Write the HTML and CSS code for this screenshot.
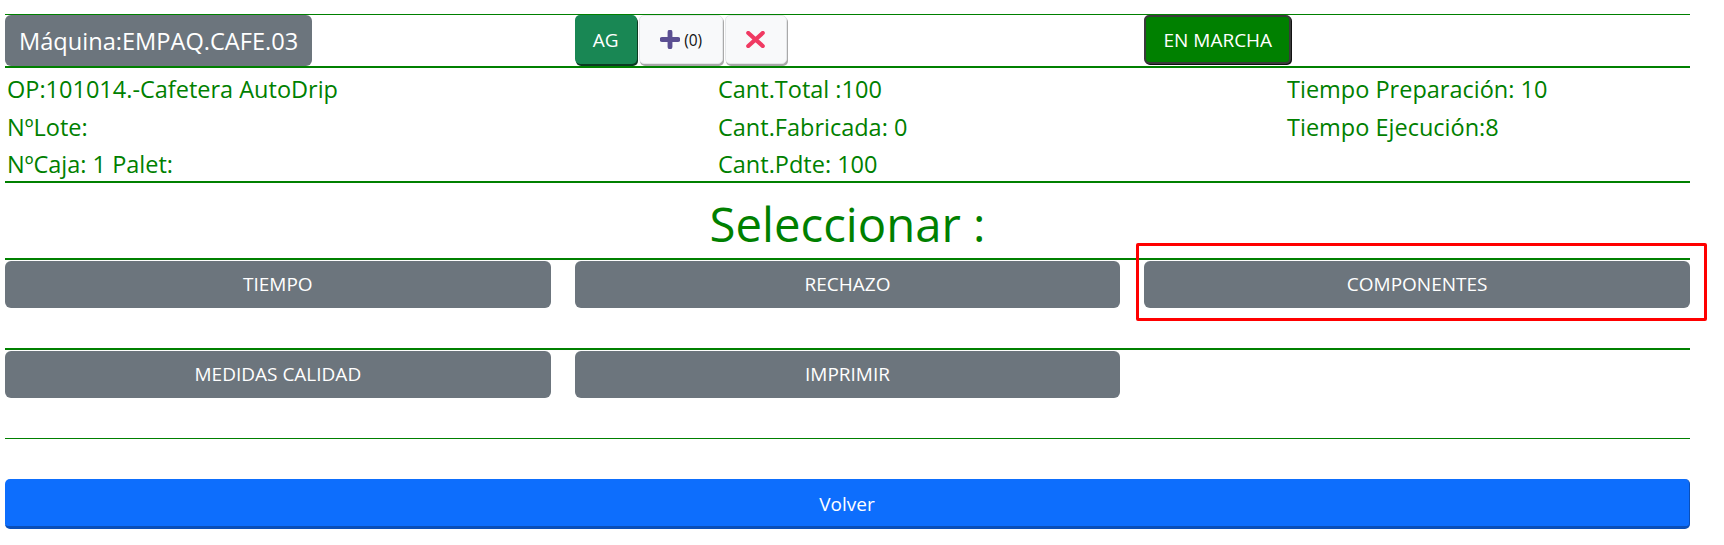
FILE: index.html
```html
<!DOCTYPE html>
<html lang="es">
<head>
<meta charset="utf-8">
<title>Máquina EMPAQ.CAFE.03</title>
<link rel="stylesheet" href="styles.css">
</head>
<body>
<div class="page">
  <div class="header">
    <div class="cell">
      <span class="machine">Máquina:EMPAQ.CAFE.03</span>
    </div>
    <div class="cell tools">
      <button class="btn btn-ag">AG</button>
      <button class="btn btn-light btn-plus">
        <svg class="icon-plus" viewBox="0 0 19 18" width="19" height="18" aria-hidden="true">
          <path d="M9.5 2 V16 M2 9 H17" stroke="#5b4f92" stroke-width="4.6" stroke-linecap="round" fill="none"/>
        </svg>
        <span class="count">(0)</span>
      </button>
      <button class="btn btn-light btn-x">
        <svg class="icon-x" viewBox="0 0 19 17" width="19" height="17" aria-hidden="true">
          <path d="M2.3 2 L16.7 15 M16.7 2 L2.3 15" stroke="#f03a62" stroke-width="4.2" stroke-linecap="round" fill="none"/>
        </svg>
      </button>
    </div>
    <div class="cell">
      <button class="btn btn-run">EN MARCHA</button>
    </div>
  </div>

  <div class="info">
    <div class="info-col">
      <div class="info-line">OP:101014.-Cafetera AutoDrip</div>
      <div class="info-line">NºLote:</div>
      <div class="info-line">NºCaja: 1 Palet:</div>
    </div>
    <div class="info-col">
      <div class="info-line">Cant.Total :100</div>
      <div class="info-line">Cant.Fabricada: 0</div>
      <div class="info-line">Cant.Pdte: 100</div>
    </div>
    <div class="info-col">
      <div class="info-line">Tiempo Preparación: 10</div>
      <div class="info-line">Tiempo Ejecución:8</div>
    </div>
  </div>

  <div class="title">
    <h1>Seleccionar :</h1>
  </div>

  <div class="btn-row">
    <button class="btn btn-gray">TIEMPO</button>
    <button class="btn btn-gray">RECHAZO</button>
    <button class="btn btn-gray">COMPONENTES</button>
  </div>

  <div class="btn-row btn-row-last">
    <button class="btn btn-gray">MEDIDAS CALIDAD</button>
    <button class="btn btn-gray">IMPRIMIR</button>
  </div>

  <button class="btn btn-back">Volver</button>
</div>

<div class="highlight"></div>
</body>
</html>
```

FILE: styles.css
```css
* {
  box-sizing: border-box;
}

html, body {
  margin: 0;
  padding: 0;
  background: #ffffff;
}

body {
  font-family: "Open Sans", "Noto Sans", "Liberation Sans", sans-serif;
  color: #212529;
  position: relative;
  height: 545px;
  overflow: hidden;
}

.page {
  width: 1685px;
  margin-left: 5px;
  padding-top: 14px;
}

/* ---------- header ---------- */
.header {
  display: grid;
  grid-template-columns: repeat(3, 1fr);
  column-gap: 24px;
  border-top: 1px solid #008000;
  border-bottom: 2px solid #008000;
  height: 54px;
  align-items: start;
}

.cell {
  display: flex;
  align-items: flex-start;
}

.machine {
  display: inline-flex;
  align-items: center;
  height: 51px;
  padding: 0 14px;
  background: #6c757d;
  color: #ffffff;
  font-size: 23.6px;
  border-radius: 6px;
  white-space: nowrap;
}

.tools {
  gap: 2px;
}

.btn {
  font-family: inherit;
  border: 0;
  margin: 0;
  cursor: pointer;
  display: inline-flex;
  align-items: center;
  justify-content: center;
  font-size: 19px;
  color: #ffffff;
  border-radius: 5px;
  padding: 0;
}

.btn-ag {
  width: 62px;
  height: 49px;
  background: #198754;
  box-shadow: 1px 2px 0 #0c3a22;
}

.btn-light {
  height: 49px;
  background: #f8f9fa;
  border: 1px solid #e4e6e8;
  box-shadow: 1px 2px 0 #a9a9a9;
  color: #212529;
}

.btn-plus {
  width: 84px;
  gap: 4px;
  padding-left: 1px;
}

.icon-plus {
  width: 20px;
  height: 19px;
}

.count {
  font-size: 15.5px;
  color: #111;
}

.btn-x {
  width: 62px;
}

.btn-run {
  width: 147px;
  height: 49px;
  background: #008000;
  border: 2px solid #3a3a3a;
  box-shadow: 1px 1px 0 #111;
  border-radius: 5px;
}

/* ---------- info ---------- */
.info {
  display: grid;
  grid-template-columns: 711px 569px 1fr;
  border-bottom: 2px solid #008000;
  height: 114.5px;
  padding-left: 2px;
  padding-top: 3px;
}

.info-line {
  font-size: 23.5px;
  line-height: 37.5px;
  color: #008000;
  white-space: nowrap;
}

/* ---------- title ---------- */
.title {
  border-bottom: 2px solid #008000;
  padding: 12px 0 6px;
  text-align: center;
}

.title h1 {
  margin: 0;
  font-size: 47.3px;
  font-weight: 400;
  line-height: 57px;
  color: #008000;
}

/* ---------- option buttons ---------- */
.btn-row {
  display: grid;
  grid-template-columns: repeat(3, 1fr);
  column-gap: 24px;
  align-items: start;
  height: 90px;
  padding-top: 1px;
  border-bottom: 2px solid #008000;
}

.btn-row-last {
  height: 89px;
  border-bottom: 1px solid #008000;
}

.btn-gray {
  height: 47px;
  width: 100%;
  background: #6c757d;
  border-radius: 6px;
}

/* ---------- back ---------- */
.btn-back {
  margin-top: 40px;
  width: 100%;
  height: 50px;
  padding-top: 3px;
  background: #0d6efd;
  border-bottom: 3px solid #0a4fb8;
  border-right: 1px solid #0a4fb8;
  border-radius: 5px;
}

/* ---------- annotation overlay ---------- */
.highlight {
  position: absolute;
  left: 1136px;
  top: 243px;
  width: 571px;
  height: 78px;
  border: 3px solid #ff0000;
  border-radius: 2px;
  pointer-events: none;
}
```
